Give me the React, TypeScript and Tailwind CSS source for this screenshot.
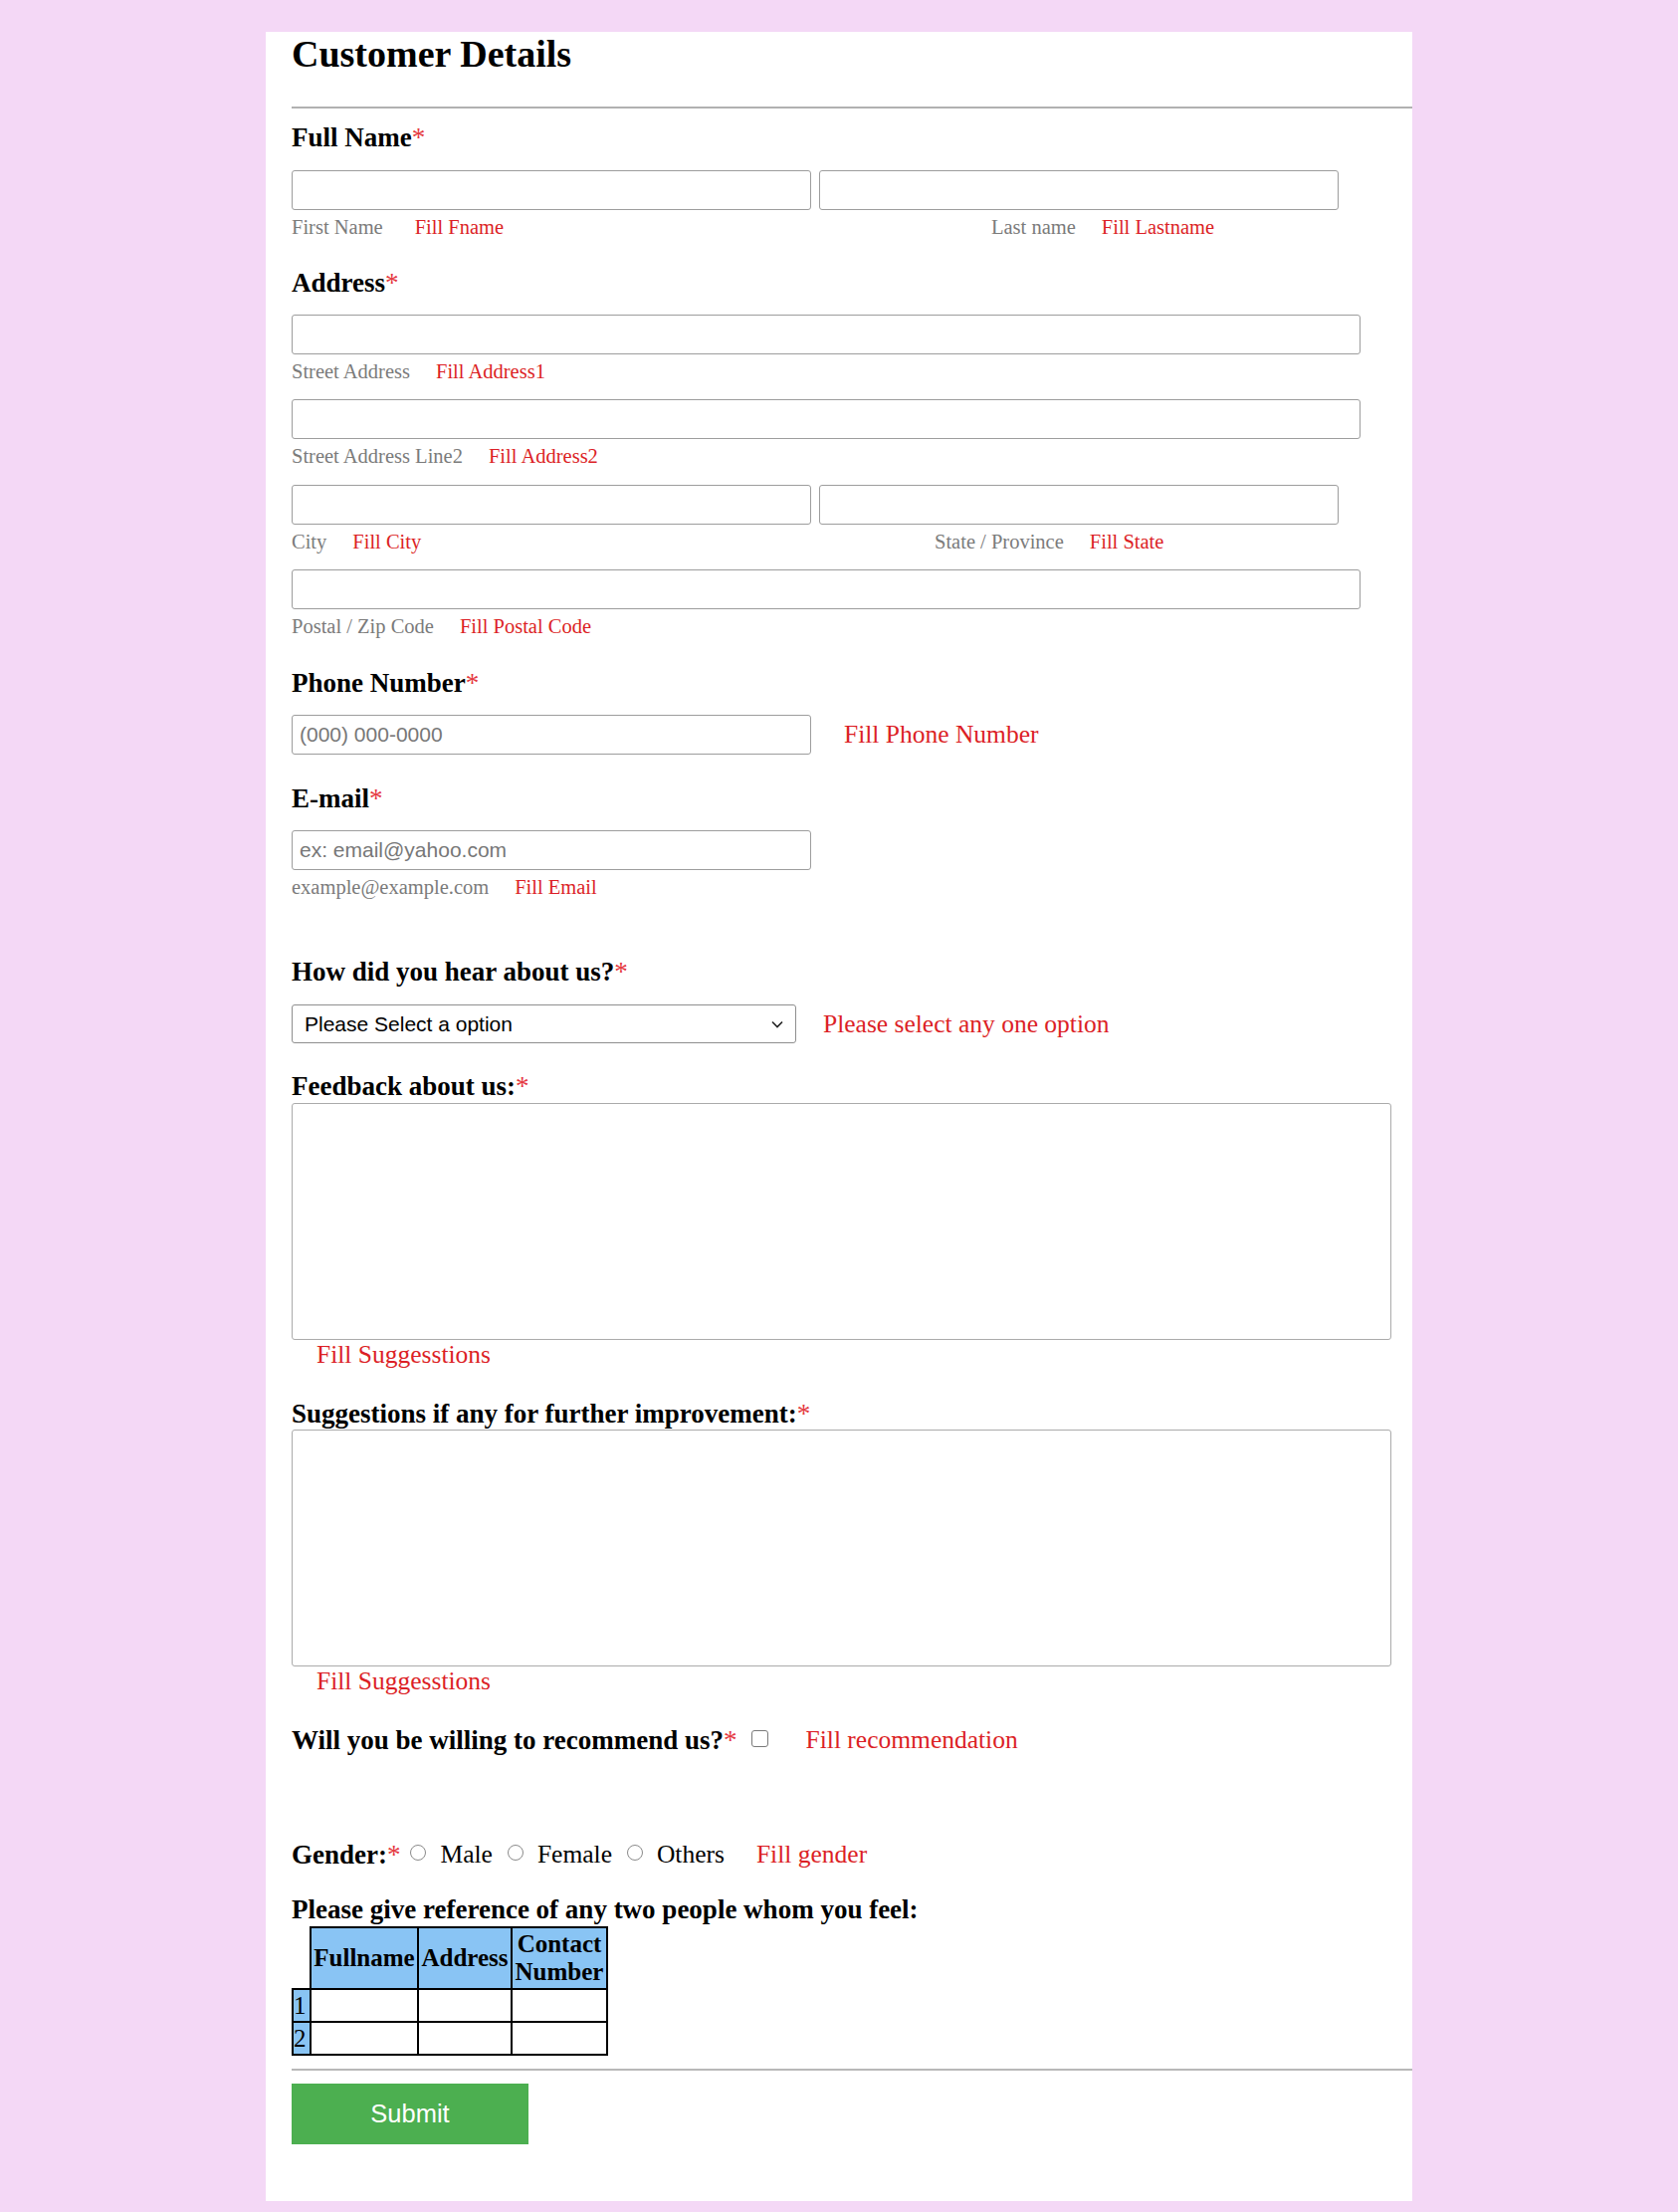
import type { ReactNode } from 'react'

// shared text colours
const RED = 'text-[#dc1f26]'
const GRAY = 'text-[#7b7b7b]'
const SANS = "font-['Liberation_Sans',Arial,sans-serif]"

function Req() {
  return <span className="font-normal text-[#e5383e]">*</span>
}

function Label({ children, className = '', required = true }: { children: ReactNode; className?: string; required?: boolean }) {
  return (
    <div className={`text-[27px] font-bold leading-[32px] ${className}`}>
      {children}
      {required && <Req />}
    </div>
  )
}

function TextInput({ className = '', placeholder }: { className?: string; placeholder?: string }) {
  return (
    <input
      type="text"
      placeholder={placeholder}
      className={`h-[40px] rounded-[3px] border border-[#9d9d9d] bg-white px-[7px] ${SANS} text-[21px] text-black outline-none placeholder:text-[#777] ${className}`}
    />
  )
}

function Hint({ label, error, gap = 'ml-[26px]' }: { label: string; error: string; gap?: string }) {
  return (
    <>
      <span className={GRAY}>{label}</span>
      <span className={`${gap} ${RED}`}>{error}</span>
    </>
  )
}

const HINT_ROW = 'mt-[5px] flex text-[20.5px] leading-[24.5px]'
const BIG_RED = `text-[25.5px] leading-[32px] ${RED}`

export default function App() {
  return (
    <div className="min-h-screen bg-[#f4d8f6] pt-[32px] pb-[6px] font-['Liberation_Serif','Times_New_Roman',serif] text-black">
      <form className="mx-auto w-[1152px] bg-white pb-[57px] pl-[26px]" onSubmit={(e) => e.preventDefault()}>
        <h1 className="text-[38px] font-bold leading-[44px]">Customer Details</h1>
        <hr className="mt-[31px] h-[2px] border-none bg-[#b1b1b1]" />

        {/* name */}
        <Label className="mt-[13px]">Full Name</Label>
        <div className="mt-[17px] flex gap-[8px]">
          <TextInput className="w-[522px]" />
          <TextInput className="w-[522px]" />
        </div>
        <div className={HINT_ROW}>
          <div className="w-[522px]">
            <Hint label="First Name" error="Fill Fname" gap="ml-[32px]" />
          </div>
          <div className="ml-[8px] pl-[173px]">
            <Hint label="Last name" error="Fill Lastname" />
          </div>
        </div>

        {/* address */}
        <Label className="mt-[27px]">Address</Label>
        <TextInput className="mt-[16px] block w-[1074px]" />
        <div className={HINT_ROW}>
          <Hint label="Street Address" error="Fill Address1" />
        </div>
        <TextInput className="mt-[16px] block w-[1074px]" />
        <div className={HINT_ROW}>
          <Hint label="Street Address Line2" error="Fill Address2" />
        </div>
        <div className="mt-[16px] flex gap-[8px]">
          <TextInput className="w-[522px]" />
          <TextInput className="w-[522px]" />
        </div>
        <div className={HINT_ROW}>
          <div className="w-[522px]">
            <Hint label="City" error="Fill City" />
          </div>
          <div className="ml-[8px] pl-[116px]">
            <Hint label="State / Province" error="Fill State" />
          </div>
        </div>
        <TextInput className="mt-[16px] block w-[1074px]" />
        <div className={HINT_ROW}>
          <Hint label="Postal / Zip Code" error="Fill Postal Code" />
        </div>

        {/* phone */}
        <Label className="mt-[28px]">Phone Number</Label>
        <div className="mt-[16px] flex items-center">
          <TextInput className="w-[522px]" placeholder="(000) 000-0000" />
          <span className={`ml-[33px] ${BIG_RED}`}>Fill Phone Number</span>
        </div>

        {/* email */}
        <Label className="mt-[28px]">E-mail</Label>
        <TextInput className="mt-[16px] block w-[522px]" placeholder="ex: email@yahoo.com" />
        <div className={HINT_ROW}>
          <Hint label="example@example.com" error="Fill Email" />
        </div>

        {/* source */}
        <Label className="mt-[57px]">How did you hear about us?</Label>
        <div className="mt-[17px] flex items-center">
          <div className="relative w-[507px]">
            <select
              defaultValue=""
              className={`block h-[39px] w-full appearance-none rounded-[3px] border border-[#8f8f8f] bg-white pl-[12px] ${SANS} text-[21px] text-black outline-none`}
            >
              <option value="">Please Select a option</option>
              <option value="friends">Friends</option>
              <option value="social">Social media</option>
              <option value="ads">Advertisement</option>
            </select>
            <svg
              className="pointer-events-none absolute right-[13px] top-[16px]"
              width="12"
              height="8"
              viewBox="0 0 12 8"
              fill="none"
            >
              <polyline points="1,1.5 6,6.5 11,1.5" stroke="#222" strokeWidth="1.6" />
            </svg>
          </div>
          <span className={`ml-[27px] ${BIG_RED}`}>Please select any one option</span>
        </div>

        {/* feedback */}
        <Label className="mt-[27px]">Feedback about us:</Label>
        <textarea className="mt-px block h-[238px] w-[1105px] resize-none rounded-[3px] border border-[#ababab] bg-white outline-none" />
        <div className={`pl-[25px] text-[25.5px] leading-[30px] ${RED}`}>Fill Suggesstions</div>

        <Label className="mt-[28px]">Suggestions if any for further improvement:</Label>
        <textarea className="block h-[238px] w-[1105px] resize-none rounded-[3px] border border-[#ababab] bg-white outline-none" />
        <div className={`pl-[25px] text-[25.5px] leading-[30px] ${RED}`}>Fill Suggesstions</div>

        {/* recommend */}
        <div className="mt-[28px] flex items-center">
          <Label>Will you be willing to recommend us?</Label>
          <input
            type="checkbox"
            className="-mt-[4px] ml-[14px] h-[17px] w-[17px] appearance-none rounded-[3px] border border-[#7a7a7a] bg-white"
          />
          <span className={`ml-[38px] ${BIG_RED}`}>Fill recommendation</span>
        </div>

        {/* gender */}
        <div className="mt-[83px] flex items-center text-[25.5px] leading-[32px]">
          <Label>Gender:</Label>
          {['Male', 'Female', 'Others'].map((g, i) => (
            <label key={g} className={`flex items-center ${i === 0 ? 'ml-[10px]' : 'ml-[15px]'}`}>
              <input
                type="radio"
                name="gender"
                className="-mt-[5px] h-[16px] w-[16px] appearance-none rounded-full border border-[#8a8a8a] bg-white"
              />
              <span className="ml-[14px]">{g}</span>
            </label>
          ))}
          <span className={`ml-[32px] ${RED}`}>Fill gender</span>
        </div>

        {/* references */}
        <Label className="mt-[23px]" required={false}>
          Please give reference of any two people whom you feel:
        </Label>
        <table className="mt-px w-[316px] table-fixed border-collapse text-[25px] leading-[28px]">
          <thead>
            <tr>
              <th className="w-[18px] p-0" />
              <th className="h-[62px] w-[108px] border-2 border-black bg-[#89c4f4] p-0 font-bold">Fullname</th>
              <th className="w-[94px] border-2 border-black bg-[#89c4f4] p-0 font-bold">Address</th>
              <th className="w-[96px] border-2 border-black bg-[#89c4f4] p-0 font-bold">Contact Number</th>
            </tr>
          </thead>
          <tbody>
            {[1, 2].map((n) => (
              <tr key={n}>
                <td className="h-[33px] border-2 border-black bg-[#89c4f4] p-0 text-left">{n}</td>
                <td className="border-2 border-black p-0" />
                <td className="border-2 border-black p-0" />
                <td className="border-2 border-black p-0" />
              </tr>
            ))}
          </tbody>
        </table>

        <hr className="mt-[13px] h-[2px] border-none bg-[#b8b8b8]" />
        <button
          type="submit"
          className={`mt-[13px] block h-[61px] w-[238px] bg-[#4caf50] ${SANS} text-[25.5px] text-white`}
        >
          Submit
        </button>
      </form>
    </div>
  )
}
